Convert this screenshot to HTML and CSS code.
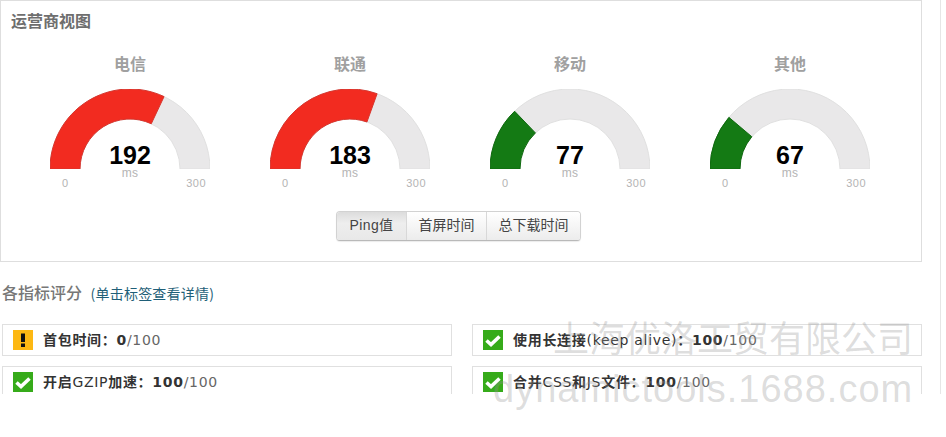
FILE: index.html
```html
<!DOCTYPE html>
<html lang="zh">
<head>
<meta charset="utf-8">
<title>运营商视图</title>
<link rel="stylesheet" href="styles.css">
</head>
<body>
<div class="page">
  <div class="frame">
    <section class="panel">
      <h2 class="panel-title">运营商视图</h2>
      <div class="gauges">
        <div class="gauge">
          <h3 class="gauge-name">电信</h3>
          <div class="dial">
            <svg class="arc" viewBox="0 0 160 80" width="160" height="80">
              <path class="track" d="M0 80A80 80 0 0 1 160 80H130A50 50 0 0 0 30 80Z"/>
              <path class="red" d="M0 80A80 80 0 0 1 114.06 7.62L101.29 34.76A50 50 0 0 0 30 80Z"/>
            </svg>
            <div class="value">192</div>
            <div class="unit">ms</div>
          </div>
          <div class="scale"><span>0</span><span>300</span></div>
        </div>
        <div class="gauge">
          <h3 class="gauge-name">联通</h3>
          <div class="dial">
            <svg class="arc" viewBox="0 0 160 80" width="160" height="80">
              <path class="track" d="M0 80A80 80 0 0 1 160 80H130A50 50 0 0 0 30 80Z"/>
              <path class="red" d="M0 80A80 80 0 0 1 107.1 4.73L96.94 32.96A50 50 0 0 0 30 80Z"/>
            </svg>
            <div class="value">183</div>
            <div class="unit">ms</div>
          </div>
          <div class="scale"><span>0</span><span>300</span></div>
        </div>
        <div class="gauge">
          <h3 class="gauge-name">移动</h3>
          <div class="dial">
            <svg class="arc" viewBox="0 0 160 80" width="160" height="80">
              <path class="track" d="M0 80A80 80 0 0 1 160 80H130A50 50 0 0 0 30 80Z"/>
              <path class="green" d="M0 80A80 80 0 0 1 24.63 22.26L45.4 43.91A50 50 0 0 0 30 80Z"/>
            </svg>
            <div class="value">77</div>
            <div class="unit">ms</div>
          </div>
          <div class="scale"><span>0</span><span>300</span></div>
        </div>
        <div class="gauge">
          <h3 class="gauge-name">其他</h3>
          <div class="dial">
            <svg class="arc" viewBox="0 0 160 80" width="160" height="80">
              <path class="track" d="M0 80A80 80 0 0 1 160 80H130A50 50 0 0 0 30 80Z"/>
              <path class="green" d="M0 80A80 80 0 0 1 18.9 28.36L41.81 47.73A50 50 0 0 0 30 80Z"/>
            </svg>
            <div class="value">67</div>
            <div class="unit">ms</div>
          </div>
          <div class="scale"><span>0</span><span>300</span></div>
        </div>
      </div>
      <div class="tabs">
        <button class="tab tab-active">Ping值</button>
        <button class="tab tab-mid">首屏时间</button>
        <button class="tab tab-last">总下载时间</button>
      </div>
    </section>
    <h2 class="section-title">各指标评分 <small class="hint">(单击标签查看详情)</small></h2>
    <div class="scores">
      <div class="score">
        <svg class="icon" viewBox="0 0 20 20" width="20" height="20"><rect class="warn-bg" width="20" height="20"/><rect class="warn-mark" x="8" y="3.5" width="4" height="8.5"/><rect class="warn-mark" x="8" y="13.5" width="4" height="3.5"/></svg>
        <span class="score-text"><em>首包时间：</em><b>0</b><i>/100</i></span>
      </div>
      <div class="score">
        <svg class="icon" viewBox="0 0 20 20" width="20" height="20"><rect class="ok-bg" width="20" height="20"/><path class="ok-mark" d="M3.5 10.5L8 14.5L16.5 6.5"/></svg>
        <span class="score-text"><em>使用长连接</em>(keep alive)<em>：</em><b>100</b><i>/100</i></span>
      </div>
      <div class="score">
        <svg class="icon" viewBox="0 0 20 20" width="20" height="20"><rect class="ok-bg" width="20" height="20"/><path class="ok-mark" d="M3.5 10.5L8 14.5L16.5 6.5"/></svg>
        <span class="score-text"><em>开启</em>GZIP<em>加速：</em><b>100</b><i>/100</i></span>
      </div>
      <div class="score">
        <svg class="icon" viewBox="0 0 20 20" width="20" height="20"><rect class="ok-bg" width="20" height="20"/><path class="ok-mark" d="M3.5 10.5L8 14.5L16.5 6.5"/></svg>
        <span class="score-text"><em>合并</em>CSS<em>和</em>JS<em>文件：</em><b>100</b><i>/100</i></span>
      </div>
    </div>
  </div>
  <div class="watermark watermark-cn">上海优洛工贸有限公司</div>
  <div class="watermark watermark-en">dynamictools.1688.com</div>
</div>
</body>
</html>
```
FILE: styles.css
```css
* { box-sizing: border-box; }
html, body { margin: 0; background: #fff; }
body { font-family: "Liberation Sans", "Noto Sans CJK SC", sans-serif; }
.page { position: relative; width: 946px; height: 437px; overflow: hidden; }
.frame { width: 941px; height: 394px; overflow: hidden; border-right: 1px solid #e6e6e6; }
.panel { width: 922px; height: 262px; border: 1px solid #dedede; padding: 10px 0 0 10px; }
.panel-title { margin: 0; font: 700 16px/18px "Noto Sans CJK SC", sans-serif; color: #6e6e6e; }
.gauges { display: flex; margin: 23px 0 0 9px; }
.gauge { width: 220px; display: flex; flex-direction: column; align-items: center; }
.gauge-name { margin: 0; font: 700 16px/22px "Noto Sans CJK SC", sans-serif; color: #a0a0a0; }
.dial { position: relative; width: 160px; height: 80px; margin-top: 15px; }
.arc { display: block; }
.track { fill: #e9e8e9; stroke: #e0e0e0; stroke-width: 1; }
.red { fill: #f22b20; stroke: #d8342c; stroke-width: 1; }
.green { fill: #147a14; stroke: #0f6a0f; stroke-width: 1; }
.value { position: absolute; left: 0; right: 0; top: 51px; text-align: center; font: 700 25px/30px "Liberation Sans", sans-serif; color: #000; }
.unit { position: absolute; left: 0; right: 0; top: 78px; text-align: center; font: 12px/12px "Liberation Sans", sans-serif; color: #b4b4b4; letter-spacing: .3px; }
.scale { width: 160px; display: flex; justify-content: space-between; padding: 7px 4px 0 12px; font: 11px/14px "Liberation Sans", sans-serif; color: #b4b4b4; letter-spacing: .5px; }
.tabs { display: flex; width: 245px; height: 30px; margin: 21px 0 0 325px; border: 1px solid #d2d2d2; border-bottom-color: #b9b9b9; border-radius: 4px; overflow: hidden; box-shadow: 0 1px 1px rgba(0,0,0,.08); }
.tab { padding: 0 0 2px; border: 0; font: 14px/26px "Liberation Sans", "Noto Sans CJK SC", sans-serif; color: #444; background: linear-gradient(#fff, #ececec); }
.tab-active { width: 69px; background: linear-gradient(#dcdcdc, #eeeeee 40%, #e8e8e8); letter-spacing: .4px; }
.tab-mid { width: 81px; border-left: 1px solid #d8d8d8; border-right: 1px solid #d8d8d8; }
.tab-last { flex: 1; }
.section-title { margin: 20px 0 0 2px; font: 500 16px/20px "Noto Sans CJK SC", sans-serif; color: #777; }
.hint { margin-left: 5px; font: 400 14px/20px "Noto Sans CJK SC", sans-serif; color: #1f5f78; letter-spacing: .2px; }
.scores { display: grid; grid-template-columns: 450px 450px; column-gap: 20px; row-gap: 10px; margin: 21px 0 0 2px; }
.score { display: flex; align-items: center; height: 32px; border: 1px solid #e0e0e0; padding-left: 10px; }
.icon { flex: none; display: block; }
.score-text { margin-left: 10px; font: 400 14px/18px "DejaVu Sans", "Noto Sans CJK SC", sans-serif; color: #333; letter-spacing: .7px; }
.score-text em { font-style: normal; font-weight: 700; }
.score-text b { font-weight: 700; }
.score-text i { font-style: normal; font-weight: 400; color: #666; }
.warn-bg { fill: #fdb813; }
.warn-mark { fill: #111; }
.ok-bg { fill: #36ab1a; }
.ok-mark { fill: none; stroke: #fff; stroke-width: 3.6; }
.watermark { position: absolute; white-space: nowrap; color: rgba(150,150,150,.32); pointer-events: none; }
.watermark-cn { left: 553px; top: 314px; font: 36px/44px "Noto Sans CJK SC", sans-serif; }
.watermark-en { left: 493px; top: 365px; font: 38px/48px "Liberation Sans", sans-serif; letter-spacing: 1px; }
```
